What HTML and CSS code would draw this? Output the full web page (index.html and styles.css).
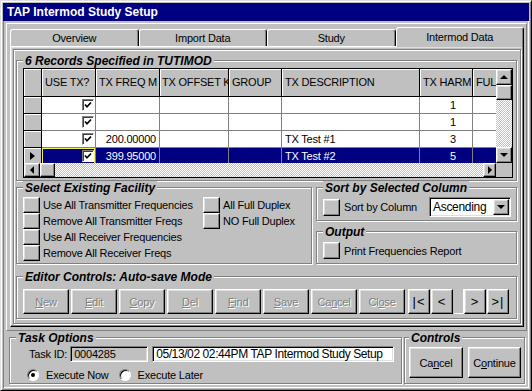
FILE: index.html
```html
<!DOCTYPE html>
<html lang="en">
  <head>
    <meta charset="utf-8" />
    <title>TAP Intermod Study Setup</title>
    <link rel="stylesheet" href="styles.css">
  </head>
  <body>
    <div class="window">
      <div class="titlebar">TAP Intermod Study Setup</div>
      <div class="client">

        <div class="studyframe">
          <div class="tabs">
            <div class="tab">Overview</div>
            <div class="tab">Import Data</div>
            <div class="tab">Study</div>
            <div class="tab active">Intermod Data</div>
          </div>

          <div class="panel">
            <div class="inner">

              <fieldset class="group records">
                <legend>6 Records Specified in TUTIMOD</legend>
                <div class="grid">
                  <div class="grid-top">
                    <div class="grid-body">
                      <div class="row head">
                        <div class="cell sel"></div>
                        <div class="cell w-use">USE TX?</div>
                        <div class="cell w-freq">TX FREQ M</div>
                        <div class="cell w-off">TX OFFSET K</div>
                        <div class="cell w-grp">GROUP</div>
                        <div class="cell w-desc">TX DESCRIPTION</div>
                        <div class="cell w-harm">TX HARM</div>
                        <div class="cell w-full">FUL</div>
                      </div>
                      <div class="row">
                        <div class="cell sel"></div>
                        <div class="cell w-use"><span class="chk"><svg width="8" height="8" viewBox="0 0 8 8"><path d="M1 3.5 L3 5.8 L7 1.5" fill="none" stroke="#000" stroke-width="1.7"/></svg></span></div>
                        <div class="cell w-freq"></div>
                        <div class="cell w-off"></div>
                        <div class="cell w-grp"></div>
                        <div class="cell w-desc"></div>
                        <div class="cell w-harm">1</div>
                        <div class="cell w-full"></div>
                      </div>
                      <div class="row">
                        <div class="cell sel"></div>
                        <div class="cell w-use"><span class="chk"><svg width="8" height="8" viewBox="0 0 8 8"><path d="M1 3.5 L3 5.8 L7 1.5" fill="none" stroke="#000" stroke-width="1.7"/></svg></span></div>
                        <div class="cell w-freq"></div>
                        <div class="cell w-off"></div>
                        <div class="cell w-grp"></div>
                        <div class="cell w-desc"></div>
                        <div class="cell w-harm">1</div>
                        <div class="cell w-full"></div>
                      </div>
                      <div class="row">
                        <div class="cell sel"></div>
                        <div class="cell w-use"><span class="chk"><svg width="8" height="8" viewBox="0 0 8 8"><path d="M1 3.5 L3 5.8 L7 1.5" fill="none" stroke="#000" stroke-width="1.7"/></svg></span></div>
                        <div class="cell w-freq">200.00000</div>
                        <div class="cell w-off"></div>
                        <div class="cell w-grp"></div>
                        <div class="cell w-desc">TX Test #1</div>
                        <div class="cell w-harm">3</div>
                        <div class="cell w-full"></div>
                      </div>
                      <div class="row current">
                        <div class="cell sel"><span class="tri-right"></span></div>
                        <div class="cell w-use focus"><span class="chk"><svg width="8" height="8" viewBox="0 0 8 8"><path d="M1 3.5 L3 5.8 L7 1.5" fill="none" stroke="#000" stroke-width="1.7"/></svg></span></div>
                        <div class="cell w-freq">399.95000</div>
                        <div class="cell w-off"></div>
                        <div class="cell w-grp"></div>
                        <div class="cell w-desc">TX Test #2</div>
                        <div class="cell w-harm">5</div>
                        <div class="cell w-full"></div>
                      </div>
                    </div>
                    <div class="vscroll">
                      <div class="sb-btn"><span class="tri-up"></span></div>
                      <div class="sb-thumb"></div>
                      <div class="sb-track"></div>
                      <div class="sb-btn"><span class="tri-down"></span></div>
                    </div>
                  </div>
                  <div class="hscroll">
                    <div class="sb-btn h-left"><span class="tri-left"></span></div>
                    <div class="sb-thumb h-thumb"></div>
                    <div class="sb-track"></div>
                    <div class="sb-btn h-right"><span class="tri-right small"></span></div>
                    <div class="corner"></div>
                  </div>
                </div>
              </fieldset>

              <div class="facility">
                <fieldset class="group select">
                  <legend>Select Existing Facility</legend>
                  <div class="fac-cols">
                    <div class="fac-list first">
                      <div class="opt"><span class="sqbtn"></span>Use All Transmitter Frequencies</div>
                      <div class="opt"><span class="sqbtn"></span>Remove All Transmitter Freqs</div>
                      <div class="opt"><span class="sqbtn"></span>Use All Receiver Frequencies</div>
                      <div class="opt"><span class="sqbtn"></span>Remove All Receiver Freqs</div>
                    </div>
                    <div class="fac-list">
                      <div class="opt"><span class="sqbtn"></span>All Full Duplex</div>
                      <div class="opt"><span class="sqbtn"></span>NO Full Duplex</div>
                    </div>
                  </div>
                </fieldset>

                <div class="sidecol">
                  <fieldset class="group sort">
                    <legend>Sort by Selected Column</legend>
                    <div class="sort-row">
                      <span class="sqbtn big"></span>Sort by Column
                      <div class="combo">
                        <span class="combo-text">Ascending</span>
                        <div class="sb-btn"><span class="tri-down"></span></div>
                      </div>
                    </div>
                  </fieldset>
                  <fieldset class="group output">
                    <legend>Output</legend>
                    <div class="opt"><span class="sqbtn big"></span>Print Frequencies Report</div>
                  </fieldset>
                </div>
              </div>

              <fieldset class="group editor">
                <legend>Editor Controls: Auto-save Mode</legend>
                <div class="ed-row">
                  <div class="ebtn"><span><u>N</u>ew</span></div>
                  <div class="ebtn"><span><u>E</u>dit</span></div>
                  <div class="ebtn"><span><u>C</u>opy</span></div>
                  <div class="ebtn"><span><u>D</u>el</span></div>
                  <div class="ebtn"><span><u>F</u>ind</span></div>
                  <div class="ebtn"><span><u>S</u>ave</span></div>
                  <div class="ebtn"><span>Ca<u>n</u>cel</span></div>
                  <div class="ebtn"><span>Cl<u>o</u>se</span></div>
                  <div class="nav first">|&lt;</div>
                  <div class="nav">&lt;</div>
                  <div class="slot"></div>
                  <div class="nav">&gt;</div>
                  <div class="nav">&gt;|</div>
                </div>
              </fieldset>

            </div>
          </div>
        </div>

        <div class="bottomrow">
          <fieldset class="group task">
            <legend>Task Options</legend>
            <div class="task-id">
              <span>Task ID:</span>
              <div class="field id">0004285</div>
              <div class="field desc">05/13/02 02:44PM TAP Intermod Study Setup</div>
            </div>
            <div class="radios">
              <span class="radio on"></span><span class="rlabel">Execute Now</span>
              <span class="radio second"></span><span class="rlabel">Execute Later</span>
            </div>
          </fieldset>
          <fieldset class="group controls">
            <legend>Controls</legend>
            <div class="ctl-row">
              <div class="cbtn">Ca<u>n</u>cel</div>
              <div class="cbtn second">C<u>o</u>ntinue</div>
            </div>
          </fieldset>
        </div>

      </div>
    </div>
  </body>
</html>
```

FILE: styles.css
```css
body {
  margin: 0;
  background-color: #c0c0c0;
  font-family: "Liberation Sans", Arial, sans-serif;
  font-size: 11px;
  letter-spacing: -0.2px;
  color: #000;
}

/* window chrome */
.window {
  width: 532px;
  height: 391px;
  box-sizing: border-box;
  border: 1px solid;
  border-color: #dfdfdf #000 #000 #dfdfdf;
  box-shadow: inset 1px 1px #fff, inset -1px -1px #808080;
  padding: 2px;
  display: flex;
  flex-direction: column;
}

.titlebar {
  flex: none;
  height: 18px;
  background-color: #000080;
  color: #fff;
  font-size: 12px;
  font-weight: bold;
  letter-spacing: 0;
  line-height: 18px;
  padding-left: 4px;
}

.client {
  flex: 1;
  min-width: 0;
  padding: 2px 2px 0 3px;
  box-shadow: inset 1px 0 #808080, inset -1px -1px #fff;
}

.studyframe {
  border: 1px solid;
  border-color: #fff #808080 #808080 #fff;
  padding: 3px 2px 3px 3px;
}

/* tabs */
.tabs {
  display: flex;
  align-items: flex-end;
  height: 19px;
  position: relative;
  z-index: 1;
}

.tab {
  flex: 1;
  height: 17px;
  box-sizing: border-box;
  border: 1px solid;
  border-color: #fff #000 transparent #fff;
  border-bottom: 0;
  border-radius: 3px 3px 0 0;
  box-shadow: inset -1px 0 #808080;
  background-color: #c0c0c0;
  text-align: center;
  line-height: 16px;
}

.tab.active {
  height: 20px;
  margin-bottom: -1px;
  line-height: 18px;
}

.panel {
  height: 281px;
  box-sizing: border-box;
  border: 1px solid;
  border-color: #fff #000 #000 #fff;
  box-shadow: inset -1px -1px #808080, inset 1px 1px #dfdfdf;
  padding: 2px;
  display: flex;
}

.inner {
  flex: 1;
  min-width: 0;
  border: 1px solid #808080;
  box-shadow: inset 1px 1px #fff, 1px 1px #fff;
  padding: 4px 3px 0 2px;
}

/* group boxes */
.group {
  margin: 0;
  min-width: 0;
  padding: 0 4px 4px 6px;
  border: 1px solid #808080;
  box-shadow: inset 1px 1px #fff, 1px 1px #fff;
}

.group legend {
  padding: 2px 2px 0;
  font-size: 12px;
  font-weight: bold;
  font-style: italic;
  letter-spacing: 0;
  line-height: 10px;
  background-color: #c0c0c0;
}

/* raised button look */
.sb-btn, .sb-thumb, .sqbtn, .ebtn, .nav, .cbtn, .cell.sel, .head .cell {
  box-sizing: border-box;
  background-color: #c0c0c0;
}

.sb-btn, .sb-thumb, .sqbtn, .ebtn, .nav, .cbtn {
  border: 1px solid;
  border-color: #fff #000 #000 #fff;
  box-shadow: inset -1px -1px #808080, inset 1px 1px #dfdfdf;
}

/* grid */
.records {
  padding: 2px 3px 2px 6px;
}

.grid {
  height: 110px;
  box-sizing: border-box;
  border: 1px solid #000;
  background-color: #fff;
  display: flex;
  flex-direction: column;
}

.grid-top {
  display: flex;
  height: 94px;
}

.grid-body {
  flex: 1;
  min-width: 0;
  overflow: hidden;
}

.row {
  display: flex;
  height: 17px;
}

.row.head {
  height: 28px;
}

.cell {
  flex: none;
  box-sizing: border-box;
  height: 100%;
  padding: 0 3px;
  border-right: 1px solid #808080;
  border-bottom: 1px solid #808080;
  line-height: 16px;
  white-space: nowrap;
  overflow: hidden;
}

.head .cell, .cell.sel {
  border-color: #000;
  box-shadow: inset 1px 1px #fff;
}

.head .cell {
  line-height: 27px;
}

.sel { width: 18px; }
.w-use { width: 54px; }
.w-freq { width: 64px; text-align: right; }
.w-off { width: 69px; }
.w-grp { width: 53px; }
.w-desc { width: 138px; }
.w-harm { width: 53px; text-align: right; padding-right: 16px; }
.w-full { width: 60px; }

.head .cell {
  text-align: left;
  padding: 0 3px;
}

.head .w-off {
  padding-left: 2px;
  padding-right: 0;
}

.row:not(.head) .w-use {
  display: flex;
  align-items: center;
  justify-content: flex-end;
  padding-right: 1px;
}

.chk {
  width: 12px;
  height: 12px;
  box-sizing: border-box;
  border: 1px solid;
  border-color: #808080 #fff #fff #808080;
  box-shadow: inset 1px 1px #404040;
  background-color: #fff;
  display: flex;
  align-items: center;
  justify-content: center;
}

.row.current .cell:not(.sel) {
  background-color: #000080;
  color: #fff;
}

.row.current .focus {
  box-shadow: inset 1px 1px #f0f060, inset -1px -1px #f0f060;
}

.cell.sel {
  display: flex;
  align-items: center;
  justify-content: center;
}

.tri-up, .tri-down, .tri-left, .tri-right {
  width: 0;
  height: 0;
  border: 4px solid transparent;
}

.tri-up { border-bottom-color: #000; border-top-width: 0; }
.tri-down { border-top-color: #000; border-bottom-width: 0; }
.tri-left { border-right-color: #000; border-left-width: 0; }
.tri-right { border-left: 5px solid #000; border-right-width: 0; }
.tri-right.small { border-left-width: 4px; }

.vscroll {
  flex: none;
  width: 16px;
  display: flex;
  flex-direction: column;
}

.sb-btn {
  flex: none;
  width: 16px;
  height: 16px;
  display: flex;
  align-items: center;
  justify-content: center;
}

.sb-thumb {
  flex: none;
  width: 16px;
  height: 15px;
}

.sb-track {
  flex: 1;
  background: repeating-conic-gradient(#c0c0c0 0 25%, #fff 0 50%) 0 0 / 2px 2px;
}

.hscroll {
  display: flex;
  height: 14px;
}

.hscroll .sb-btn {
  height: 14px;
}

.h-right {
  width: 13px;
}

.h-thumb {
  width: 15px;
  height: 14px;
}

.corner {
  width: 16px;
  background-color: #c0c0c0;
}

/* facility / sort / output */
.facility {
  display: flex;
}

.select {
  flex: none;
  width: 296px;
  box-sizing: border-box;
  padding: 4px 0 1px 6px;
}

.fac-cols {
  display: flex;
}

.fac-list.first {
  width: 180px;
}

.opt {
  display: flex;
  align-items: center;
  height: 16px;
  white-space: nowrap;
}

.sqbtn {
  flex: none;
  width: 17px;
  height: 16px;
  margin-right: 3px;
}

.sidecol {
  flex: 1;
  min-width: 0;
  margin-left: 4px;
  display: flex;
  flex-direction: column;
}

.sort {
  padding: 4px 5px 3px 6px;
}

.sort-row {
  display: flex;
  align-items: center;
  height: 20px;
  white-space: nowrap;
}

.sqbtn.big {
  height: 17px;
  margin-right: 4px;
}

.combo {
  margin-left: auto;
  flex: none;
  width: 82px;
  height: 20px;
  box-sizing: border-box;
  border: 1px solid;
  border-color: #808080 #fff #fff #808080;
  box-shadow: inset 1px 1px #000, inset -1px -1px #dfdfdf;
  background-color: #fff;
  padding: 1px;
  display: flex;
  align-items: center;
}

.combo-text {
  flex: 1;
  padding-left: 2px;
  font-size: 12px;
  letter-spacing: -0.3px;
}

.output {
  margin-top: 4px;
  padding: 5px 5px 4px 6px;
}

.output .opt {
  height: 17px;
}

/* editor buttons */
.editor {
  margin-top: 6px;
  padding: 7px 3px 4px 6px;
}

.ed-row {
  display: flex;
  height: 25px;
}

.ebtn {
  width: 46px;
  margin-right: 2px;
  color: #808080;
  text-shadow: 1px 1px #fff;
  display: flex;
  align-items: center;
  justify-content: center;
}

.nav {
  width: 22px;
  margin-right: 1px;
  font-size: 13px;
  letter-spacing: 1px;
  display: flex;
  align-items: center;
  justify-content: center;
}

.nav.first {
  margin-left: 1px;
}

.slot {
  width: 10px;
  box-sizing: border-box;
  border-right: 1px solid #fff;
  border-bottom: 1px solid #fff;
}

/* bottom area */
.bottomrow {
  display: flex;
  margin-left: 3px;
}

.task {
  width: 393px;
  box-sizing: border-box;
  padding: 3px 0 1px 6px;
}

.task-id {
  display: flex;
  align-items: center;
  height: 16px;
  padding-left: 13px;
}

.field {
  box-sizing: border-box;
  height: 16px;
  border: 1px solid;
  border-color: #808080 #fff #fff #808080;
  box-shadow: inset 1px 1px #000, inset -1px -1px #dfdfdf;
  padding-left: 3px;
  line-height: 14px;
  white-space: nowrap;
  overflow: hidden;
}

.field.id {
  width: 78px;
  margin-left: 3px;
  background-color: #c0c0c0;
}

.field.desc {
  width: 242px;
  margin-left: 4px;
  background-color: #fff;
  font-size: 12px;
  letter-spacing: -0.4px;
}

.radios {
  display: flex;
  align-items: center;
  height: 14px;
  margin-top: 6px;
  padding-left: 11px;
}

.radio {
  width: 12px;
  height: 12px;
  box-sizing: border-box;
  border-radius: 50%;
  border: 1px solid;
  border-color: #808080 #fff #fff #808080;
  box-shadow: inset 1px 1px #000;
  background-color: #fff;
  display: flex;
  align-items: center;
  justify-content: center;
}

.radio.on::after {
  content: "";
  width: 4px;
  height: 4px;
  border-radius: 50%;
  background-color: #000;
}

.radio.second {
  margin-left: 10px;
}

.rlabel {
  margin-left: 7px;
}

.controls {
  width: 121px;
  margin-left: 2px;
  box-sizing: border-box;
  padding: 4px 3px 5px 4px;
}

.ctl-row {
  display: flex;
}

.cbtn {
  width: 54px;
  height: 31px;
  display: flex;
  align-items: center;
  justify-content: center;
}

.cbtn.second {
  width: 53px;
  margin-left: 5px;
}
```
